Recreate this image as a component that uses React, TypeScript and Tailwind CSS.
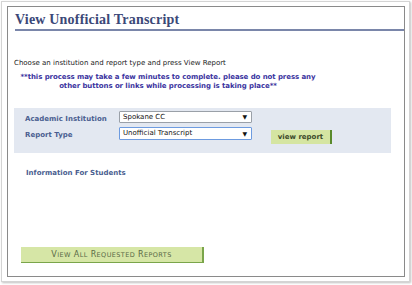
export default function App() {
  const verdana = { fontFamily: '"DejaVu Sans", Verdana, sans-serif' };
  return (
    <div className="w-[412px] h-[285px] bg-white pt-px pl-px">
      <div className="w-[409px] h-[281px] border border-[#d4d4d4] shadow-[1px_1px_2px_rgba(0,0,0,0.25)] pl-[5px] pt-[4px]">
        <div className="w-[398px] h-[271px] border border-[#8a8a8a] bg-white" style={verdana}>
          {/* Header */}
          <div className="ml-[7px] mt-[4px] pb-[1px] border-b-2 border-[#7a86aa]">
            <h1 className="text-[14px] leading-[17px] font-bold text-[#3b4878] font-['Liberation_Serif',serif] tracking-[0.2px]">
              View Unofficial Transcript
            </h1>
          </div>

          <p className="ml-[6px] mt-[28px] text-[7px] leading-[9px] text-[#222]">
            Choose an institution and report type and press View Report
          </p>
          <p className="ml-[10px] w-[300px] mt-[5px] text-[7px] leading-[9px] font-bold text-[#3b34a0] text-center whitespace-nowrap tracking-[-0.08px]">
            **this process may take a few minutes to complete. please do not press any
            <br />
            other buttons or links while processing is taking place**
          </p>

          {/* Selection panel */}
          <div className="ml-[6px] mt-[17px] w-[377px] h-[45px] bg-[#e3e8f1] pl-[11px] pt-[3px] flex">
            <div className="flex flex-col gap-[5px] pt-[3px] w-[94px]">
              <span className="text-[7px] leading-[11px] font-bold text-[#4a5e90]">Academic Institution</span>
              <span className="text-[7px] leading-[11px] font-bold text-[#4a5e90]">Report Type</span>
            </div>
            <div className="flex flex-col gap-[4px]">
              <div className="w-[133px] h-[12px] bg-white border border-[#9aa0a8] rounded-[1px] flex items-center justify-between pl-[3px] pr-[4px]">
                <span className="text-[7px] leading-none text-[#111]">Spokane CC</span>
                <span className="text-[6px] leading-none text-[#111]">▼</span>
              </div>
              <div className="w-[133px] h-[13px] bg-white border border-[#6d9be0] rounded-[1px] flex items-center justify-between pl-[3px] pr-[4px]">
                <span className="text-[7px] leading-none text-[#111]">Unofficial Transcript</span>
                <span className="text-[6px] leading-none text-[#111]">▼</span>
              </div>
            </div>
            <div className="ml-[19px] mt-[19px]">
              <div className="w-[61px] h-[14px] bg-[#d5e5a2] border-r-2 border-[#5a8a2c] flex items-center justify-center text-[7px] font-bold text-[#3c4a2a]">
                view report
              </div>
            </div>
          </div>

          <p className="ml-[18px] mt-[16px] text-[7px] leading-[9px] font-bold text-[#4a5e90]">
            Information For Students
          </p>

          <div className="ml-[13px] mt-[69px] w-[183px] h-[16px] bg-[#d6e6a6] border-r-2 border-b border-[#7aa54a] flex items-center justify-center">
            <span className="text-[8px] uppercase tracking-[0.4px] text-[#5a6a46]">
              V<span className="text-[6.5px]">iew</span> A<span className="text-[6.5px]">ll</span> R<span className="text-[6.5px]">equested</span> R<span className="text-[6.5px]">eports</span>
            </span>
          </div>
        </div>
      </div>
    </div>
  );
}
